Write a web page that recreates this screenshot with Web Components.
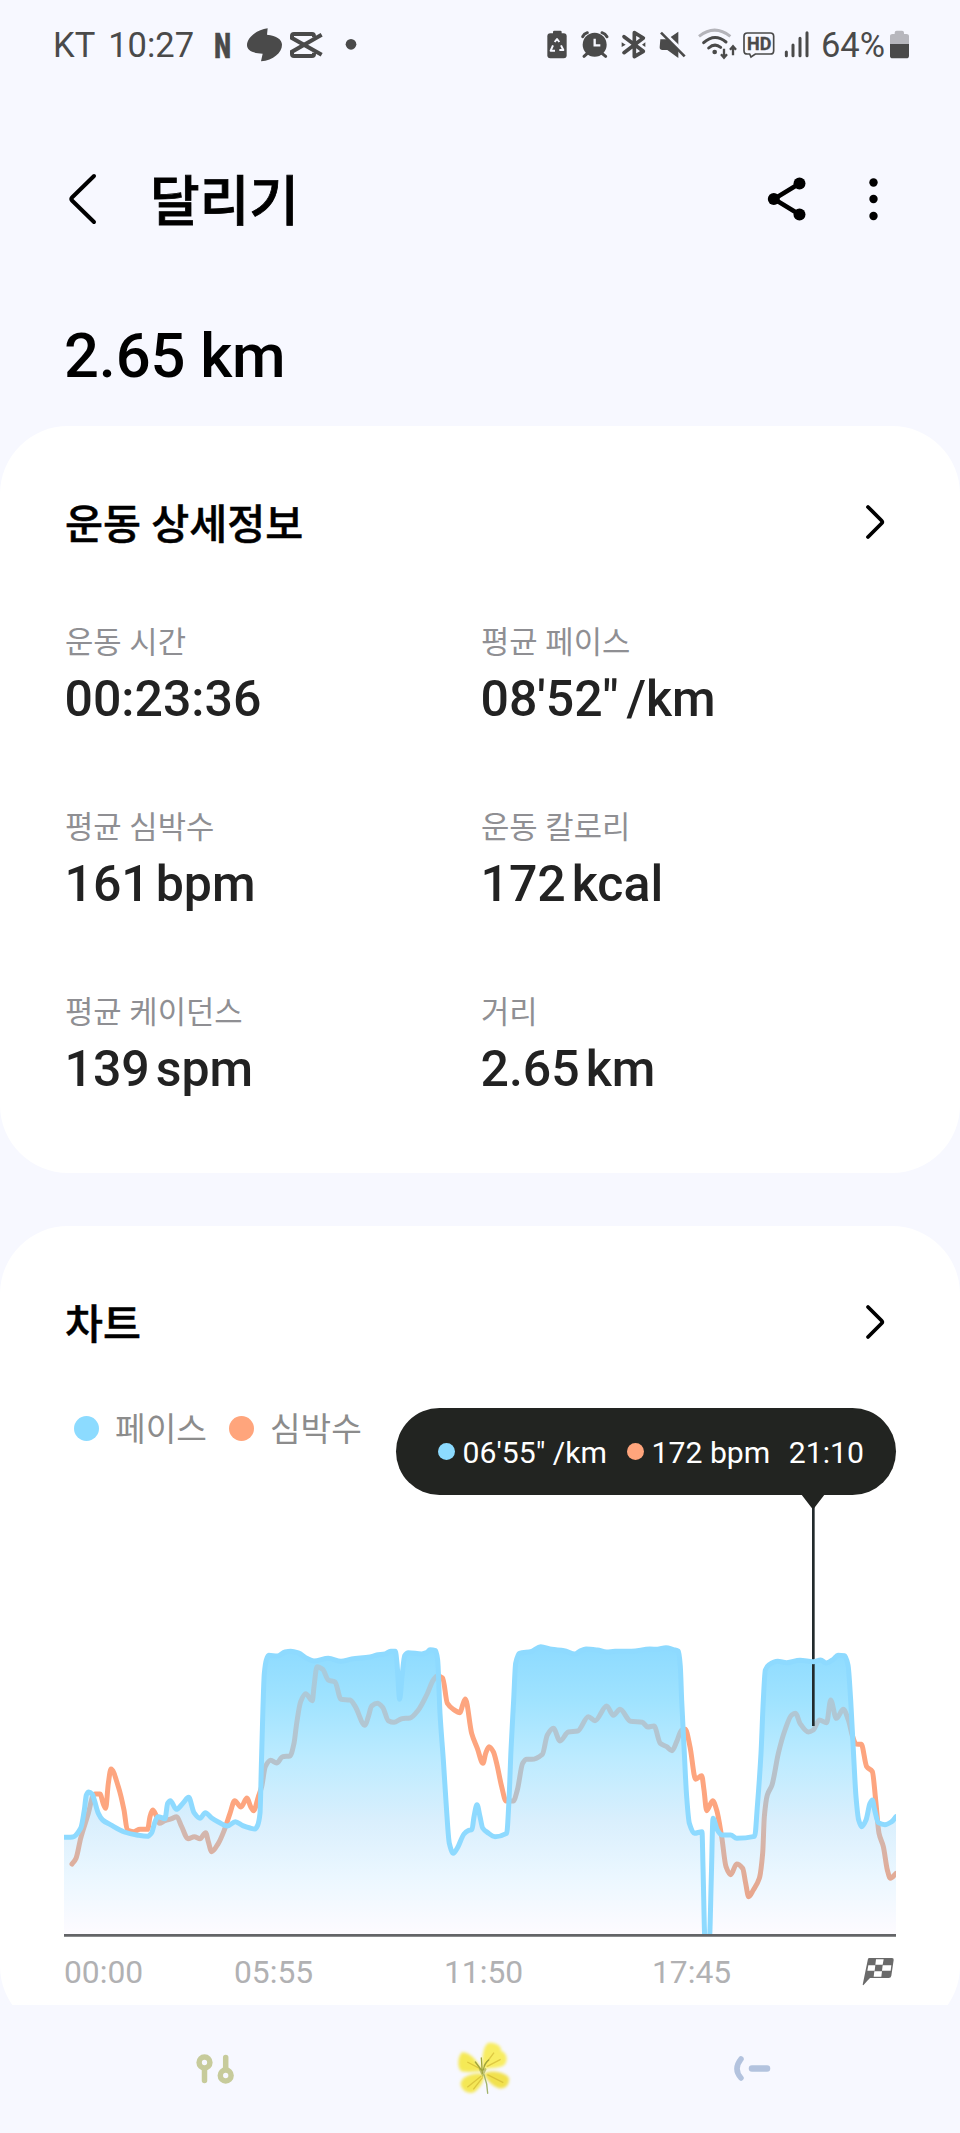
<!DOCTYPE html>
<html lang="ko">
<head>
<meta charset="utf-8">
<title>달리기</title>
<style>
  body {
    margin: 0;
    width: 960px;
    height: 2133px;
    overflow: hidden;
    background: #f7f8ff;
    color: #000;
    font-family: Roboto, 'Noto Sans CJK KR', sans-serif;
  }
</style>
</head>
<body>
<run-app></run-app>

<script>
class RunElement extends HTMLElement {
  constructor() {
    super();
    this.attachShadow({ mode: 'open' });
  }

  connectedCallback() {
    const template = document.createElement('template');
    template.innerHTML = `<style>${this.constructor.styles}</style>${this.html()}`;
    this.shadowRoot.replaceChildren(template.content.cloneNode(true));
  }
}

class RunStatusBar extends RunElement {
  static get styles() {
    return /* css */`
      :host {
        display: flex;
        align-items: flex-start;
        box-sizing: border-box;
        height: 100px;
        padding: 20px 51px 0 53px;
        color: #4a4a4a;
        font-size: 34.5px;
        line-height: 50px;
        white-space: nowrap;
      }
      svg { flex: none; }
      .time { width: 102px; margin-left: 13px; }
      .system { margin-left: auto; }
      .percent { margin: 0 5px 0 4px; }
    `;
  }

  html() {
    return /* html */`
      <span>KT</span>
      <span class="time">10:27</span>
      <svg class="apps" width="150" height="50" viewBox="630 60 450 150" fill="#4a4a4a">
        <text x="643" y="173" font-size="107" font-weight="900" stroke="#4a4a4a" stroke-width="2" textLength="50" lengthAdjust="spacingAndGlyphs">N</text>
        <path d="M803 85 L801 104 C830 106 846 119 846 134 C846 158 820 180 783 184 L788 161 C758 160 741 151 741 136 C741 112 770 90 803 85z"/>
        <g fill="none" stroke="#4a4a4a" stroke-width="12">
          <path d="M942 112 V109 Q942 102 936 102 H882 Q876 102 876 108 V114 L965 164"/>
          <path d="M965 104 L876 155 V162 Q876 168 882 168 H936 Q942 168 942 162 V158"/>
        </g>
        <circle cx="1053" cy="133" r="16"/>
      </svg>
      <svg class="system" width="273" height="50" viewBox="190 60 819 150" fill="none" stroke="#4a4a4a">
        <g stroke="none" fill="#4a4a4a">
          <rect x="217" y="92" width="26" height="14" rx="4"/>
          <rect x="200" y="100" width="58" height="75" rx="9"/>
        </g>
        <path d="M222 126 L229 117 L236 126 M241 136 L248 150 H236 M223 152 H210 L217 136" stroke="#f7f8ff" stroke-width="6" stroke-linejoin="round"/>
        <circle cx="342" cy="134" r="36" fill="#4a4a4a" stroke="none"/>
        <path d="M306 110 Q310 101 320 98 M364 98 Q374 101 379 110 M320 160 L310 169 M364 160 L375 169" stroke-width="9" stroke-linecap="round"/>
        <path d="M342 116 V136 H359" stroke="#f7f8ff" stroke-width="7"/>
        <path d="M430 110 L488 154 L461 170 V98 L488 114 L430 158" stroke-width="11" stroke-linejoin="round" stroke-linecap="round"/>
        <path d="M423 127 L435 134 L423 141z M494 127 L484 134 L494 141z" fill="#4a4a4a" stroke="none"/>
        <path d="M539 118 H560 L593 95 V174 L560 150 H545 Q537 150 537 142z" fill="#4a4a4a" stroke="none"/>
        <path d="M544 92 L618 164" stroke="#f7f8ff" stroke-width="9"/>
        <path d="M541 98 L612 169" stroke-width="8"/>
        <path d="M655 109 Q702 72 749 109" stroke="#b4b4ba" stroke-width="9"/>
        <path d="M669 128 Q702 98 736 126 M684 144 Q702 128 720 142" stroke-width="9" stroke-linecap="round"/>
        <circle cx="702" cy="156" r="7" fill="#4a4a4a" stroke="none"/>
        <path d="M730 146 V172 M721 163 L730 173 L739 163 M757 166 V140 M748 149 L757 139 L766 149" stroke-width="7"/>
        <path d="M800 99 H869 Q879 99 879 109 V152 Q879 162 869 162 H824 L811 171 L807 162 H800 Q790 162 790 152 V109 Q790 99 800 99z" stroke-width="5"/>
        <text x="799" y="149" font-size="57" font-weight="700" fill="#4a4a4a" stroke-width="1" textLength="73" lengthAdjust="spacingAndGlyphs">HD</text>
        <path d="M917 156 V167 M937 135 V167 M958 115 V167 M979 98 V167" stroke-width="9" stroke-linecap="round"/>
      </svg>
      <span class="percent">64%</span>
      <svg width="19" height="50" viewBox="1232 60 57 150">
        <path d="M1232 132 V109 Q1232 102 1240 102 H1246 V98 Q1246 92 1252 92 H1268 Q1274 92 1274 98 V102 H1281 Q1289 102 1289 109 V132z" fill="#b7b7bd"/>
        <path d="M1232 132 H1289 V167 Q1289 175 1281 175 H1240 Q1232 175 1232 167z" fill="#4a4a4a"/>
      </svg>
    `;
  }
}

class RunHeader extends RunElement {
  static get styles() {
    return /* css */`
      :host {
        display: flex;
        align-items: center;
        height: 100px;
        margin-top: 50px;
        padding: 0 81px 0 64px;
      }
      h1 {
        flex: 1;
        margin: 0 0 0 50px;
        padding-top: 5px;
        font-size: 54px;
        font-weight: 500;
        line-height: 80px;
        -webkit-text-stroke: .8px #000;
      }
      .more { margin-left: 61px; }
    `;
  }

  html() {
    return /* html */`
      <svg width="36" height="60" viewBox="0 0 36 60" fill="none" stroke="#000" stroke-width="4" stroke-linecap="round" stroke-linejoin="round">
        <path d="M30 6 L8 27.500 Q6.500 29 8 30.500 L30 52"/>
      </svg>
      <h1><slot></slot></h1>
      <svg width="42" height="50" viewBox="0 0 42 50">
        <path d="M33.500 8.500 L8 24 L33.500 39.500" fill="none" stroke="#000" stroke-width="4.500"/>
        <circle cx="33.500" cy="8.500" r="6"/><circle cx="7.800" cy="24" r="6"/><circle cx="33.500" cy="39.500" r="6"/>
      </svg>
      <svg class="more" width="10" height="50" viewBox="0 0 10 50">
        <circle cx="4.500" cy="7.500" r="4.200"/><circle cx="4.500" cy="24" r="4.200"/><circle cx="4.500" cy="41" r="4.200"/>
      </svg>
    `;
  }
}

class RunCard extends RunElement {
  static get styles() {
    return /* css */`
      :host {
        display: block;
        box-sizing: border-box;
        padding: 66px 64px 0;
        border-radius: 68px;
        background: #fff;
      }
      header {
        display: flex;
        align-items: center;
        justify-content: space-between;
        height: 60px;
        padding-right: 9px;
      }
      h2 {
        margin: 0;
        padding: 5px 0 0 1px;
        font-size: 41.3px;
        font-weight: 500;
        line-height: 60px;
        -webkit-text-stroke: .5px #000;
      }
    `;
  }

  html() {
    return /* html */`
      <header>
        <h2>${this.getAttribute('heading')}</h2>
        <svg width="24" height="40" viewBox="0 0 24 40" fill="none" stroke="#000" stroke-width="3.800" stroke-linecap="round" stroke-linejoin="round">
          <path d="M5 5 L18.500 18.500 Q20 20 18.500 21.500 L5 35"/>
        </svg>
      </header>
      <slot></slot>
    `;
  }
}

class RunMetric extends RunElement {
  static get styles() {
    return /* css */`
      :host { display: block; height: 185px; }
      .label {
        margin-bottom: 4px;
        padding-left: 1px;
        color: #8f8f93;
        font-size: 30.8px;
        line-height: 44px;
      }
      .value {
        display: flex;
        gap: 6px;
        padding-left: .5px;
        color: #222;
        font-size: 50px;
        font-weight: 500;
        line-height: 60px;
      }
      :host([unit="/km"]) .value { gap: 8px; }
    `;
  }

  html() {
    const unit = this.getAttribute('unit');
    return /* html */`
      <div class="label">${this.getAttribute('label')}</div>
      <div class="value"><span><slot></slot></span>${unit ? `<span>${unit}</span>` : ''}</div>
    `;
  }
}

class RunLegend extends RunElement {
  static get styles() {
    return /* css */`
      :host {
        display: flex;
        align-items: center;
        height: 50px;
        margin-top: 51px;
        padding-left: 10px;
        color: #8c8c8c;
        font-size: 33.3px;
        line-height: 50px;
      }
      i {
        width: 25px;
        height: 25px;
        margin-right: 16px;
        border-radius: 50%;
        background: #8cdbff;
      }
      span { padding-top: 4px; }
      .heart { margin-left: 22px; background: #ffa57c; }
    `;
  }

  html() {
    return /* html */`<i></i><span>페이스</span><i class="heart"></i><span>심박수</span>`;
  }
}

class RunTooltip extends RunElement {
  static get styles() {
    return /* css */`
      :host {
        display: flex;
        align-items: center;
        box-sizing: border-box;
        height: 87px;
        padding: 0 32px 0 42px;
        border-radius: 44px;
        background: #222421;
        color: #fff;
        font-size: 30.2px;
        line-height: 40px;
        white-space: pre;
      }
      span { padding-top: 2px; }
      i {
        width: 17px;
        height: 17px;
        margin-right: 7.5px;
        border-radius: 50%;
        background: #8cdbff;
      }
      .heart { margin-left: 20px; background: #ffa57c; }
      .time { margin-left: auto; }
      svg {
        position: absolute;
        top: 86px;
        right: 71px;
      }
    `;
  }

  html() {
    return /* html */`
      <i></i><span>06'55" /km</span>
      <i class="heart"></i><span>172 bpm</span>
      <span class="time">21:10</span>
      <svg width="24" height="16" viewBox="0 0 24 16" fill="#222421"><path d="M0 0 H24 L14 13 Q12 16 10 13z"/></svg>
    `;
  }
}

// Three chart units are one pixel; y grows downwards to the axis at 1004.
const PACE = [
  [0, 712], [26, 711], [50, 685], [61, 630], [67, 585], [74, 576], [85, 583], [91, 600], [103, 640], [116, 660],
  [139, 674], [181, 696], [218, 705], [250, 709], [263, 698], [273, 665], [282, 650], [303, 656], [311, 610],
  [319, 602], [337, 628], [358, 608], [374, 592], [390, 638], [408, 655], [424, 638], [443, 654], [463, 666],
  [490, 678], [514, 665], [536, 677], [558, 684], [573, 687], [581, 676], [588, 640], [592, 500], [597, 320],
  [601, 220], [607, 180], [614, 166], [640, 168], [663, 156], [680, 154], [703, 159], [728, 175], [750, 183],
  [793, 175], [831, 184], [863, 177], [918, 171], [938, 165], [963, 162], [980, 154], [994, 154], [999, 190],
  [1007, 298], [1014, 230], [1022, 167], [1033, 158], [1073, 162], [1088, 158], [1098, 149], [1115, 152],
  [1121, 180], [1128, 340], [1138, 480], [1147, 620], [1156, 730], [1168, 760], [1180, 744], [1200, 702],
  [1212, 692], [1224, 688], [1230, 650], [1239, 614], [1248, 650], [1256, 684], [1270, 697], [1293, 710],
  [1328, 700], [1335, 600], [1341, 450], [1349, 300], [1355, 190], [1366, 160], [1403, 154], [1430, 140],
  [1463, 148], [1500, 152], [1533, 162], [1548, 153], [1566, 147], [1600, 150], [1628, 156], [1653, 154],
  [1703, 154], [1758, 147], [1780, 148], [1806, 143], [1828, 149], [1844, 154], [1849, 200], [1853, 300],
  [1860, 440], [1868, 590], [1876, 670], [1891, 700], [1914, 695], [1917, 800], [1923, 1020], [1936, 1020],
  [1942, 830], [1947, 655], [1960, 690], [1973, 705], [2000, 705], [2018, 715], [2072, 709], [2080, 620],
  [2091, 460], [2098, 300], [2104, 210], [2114, 195], [2141, 184], [2168, 188], [2208, 181], [2248, 185],
  [2270, 180], [2286, 189], [2308, 178], [2322, 166], [2342, 167], [2352, 195], [2360, 300], [2368, 450],
  [2376, 590], [2384, 660], [2393, 680], [2406, 660], [2418, 610], [2425, 600], [2432, 630], [2443, 668],
  [2463, 674], [2483, 665], [2496, 650],
];

const HEART = [
  [24, 792], [36, 775], [50, 715], [73, 640], [86, 590], [93, 582], [108, 582], [118, 612], [125, 625], [133, 550],
  [141, 507], [163, 560], [180, 630], [190, 690], [208, 695], [228, 688], [251, 688], [258, 650], [266, 630],
  [278, 650], [286, 670], [303, 662], [323, 656], [338, 650], [353, 680], [372, 716], [391, 710], [408, 716],
  [425, 698], [433, 725], [443, 755], [463, 730], [481, 690], [498, 640], [512, 602], [531, 621], [549, 594],
  [560, 620], [569, 632], [583, 590], [593, 560], [604, 500], [620, 481], [638, 489], [656, 470], [678, 468],
  [690, 430], [698, 370], [710, 305], [725, 281], [745, 302], [750, 260], [759, 200], [776, 208], [793, 240],
  [813, 246], [831, 298], [858, 300], [873, 318], [903, 376], [913, 350], [923, 318], [940, 310], [956, 322],
  [973, 362], [990, 367], [1013, 356], [1038, 354], [1063, 330], [1088, 285], [1108, 240], [1120, 228],
  [1136, 234], [1150, 310], [1168, 328], [1188, 338], [1196, 315], [1204, 297], [1223, 400], [1240, 445],
  [1257, 490], [1265, 460], [1275, 440], [1288, 455], [1298, 490], [1313, 560], [1326, 603], [1348, 603],
  [1360, 570], [1376, 490], [1388, 478], [1403, 478], [1435, 463], [1450, 405], [1468, 385], [1488, 423],
  [1513, 396], [1541, 393], [1573, 350], [1593, 362], [1628, 318], [1648, 346], [1668, 328], [1700, 364],
  [1735, 367], [1751, 381], [1770, 378], [1789, 430], [1808, 440], [1824, 452], [1838, 425], [1853, 390],
  [1864, 388], [1878, 440], [1895, 538], [1913, 527], [1920, 570], [1928, 632], [1946, 602], [1958, 630],
  [1973, 710], [1986, 800], [2000, 824], [2018, 792], [2036, 805], [2045, 850], [2054, 890], [2068, 870],
  [2086, 835], [2096, 760], [2101, 650], [2110, 585], [2124, 555], [2143, 460], [2163, 390], [2183, 345],
  [2195, 340], [2208, 370], [2233, 396], [2248, 390], [2266, 360], [2288, 368], [2300, 300], [2317, 355],
  [2338, 328], [2353, 360], [2366, 410], [2376, 432], [2392, 433], [2408, 500], [2425, 515], [2435, 600],
  [2445, 700], [2458, 740], [2470, 810], [2479, 835], [2496, 820],
];

// Cubic path through the points, with no overshoot at peaks and dips.
function smoothPath(points) {
  const slopes = points.slice(1).map(([x, y], i) => (y - points[i][1]) / (x - points[i][0]));
  const tangents = points.map((_, i) => {
    const a = slopes[i - 1];
    const b = slopes[i];
    if (a === undefined) return b;
    if (b === undefined) return a;
    return a * b <= 0 ? 0 : 2 * a * b / (a + b);
  });
  return points.slice(1).reduce((d, [x, y], i) => {
    const [px, py] = points[i];
    const h = (x - px) / 3;
    return `${d} C${px + h} ${py + tangents[i] * h} ${x - h} ${y - tangents[i + 1] * h} ${x} ${y}`;
  }, `M${points[0]}`);
}

class RunChart extends RunElement {
  static get styles() {
    return /* css */`
      :host { display: block; position: relative; margin-top: 47px; }
      svg { display: block; }
      run-tooltip {
        position: absolute;
        top: -92px;
        right: 0;
        width: 500px;
      }
      .axis {
        display: grid;
        grid-template-columns: 170px 210px 208px 1fr auto;
        align-items: center;
        height: 71px;
        color: #b1b1b3;
        font-size: 31.8px;
        line-height: 71px;
      }
      .flag { margin: 0 1px 1px 0; }
    `;
  }

  html() {
    const pace = smoothPath(PACE);
    const heart = smoothPath(HEART);
    return /* html */`
      <svg width="832" height="437" viewBox="0 -300 2496 1311" fill="none" stroke-width="15" stroke-linecap="round" stroke-linejoin="round">
        <defs>
          <linearGradient id="fill" gradientUnits="userSpaceOnUse" x1="0" y1="150" x2="0" y2="1000">
            <stop offset="0" stop-color="#8edbff"/>
            <stop offset=".18" stop-color="#a0e3ff"/>
            <stop offset=".38" stop-color="#bcebff"/>
            <stop offset=".6" stop-color="#d9effd"/>
            <stop offset=".8" stop-color="#ebf7ff"/>
            <stop offset="1" stop-color="#fdfbff"/>
          </linearGradient>
          <linearGradient id="muted" gradientUnits="userSpaceOnUse" x1="0" y1="200" x2="0" y2="890">
            <stop offset="0" stop-color="#a8cbdc"/>
            <stop offset=".25" stop-color="#b2c6d2"/>
            <stop offset=".55" stop-color="#b9bfc6"/>
            <stop offset=".68" stop-color="#cfb9b3"/>
            <stop offset="1" stop-color="#e9a68c"/>
          </linearGradient>
          <clipPath id="plot"><rect y="-300" width="2496" height="1304"/></clipPath>
          <clipPath id="under"><path d="${pace} V1004 H0z"/></clipPath>
        </defs>
        <g clip-path="url(#plot)">
          <path d="${heart}" stroke="#fda57f"/>
          <path d="${pace} V1004 H0z" fill="url(#fill)" stroke="none"/>
          <path d="${heart}" stroke="url(#muted)" clip-path="url(#under)"/>
          <path d="M2248 -280 V378" stroke="#222a2c" stroke-width="8" stroke-linecap="butt"/>
          <path d="${pace}" stroke="#8edaff"/>
        </g>
        <path d="M0 1006 H2496" stroke="#636467" stroke-width="8" stroke-linecap="butt"/>
      </svg>
      <div class="axis">
        <span>00:00</span><span>05:55</span><span>11:50</span><span>17:45</span>
        <svg class="flag" width="33" height="28" viewBox="0 0 99 84">
          <path d="M18 2 Q19 0 22 0 H90 Q96 0 95 6 L88 53 Q87 60 80 60 H24 Q18 66 4 82 L2 80z" fill="#6a6a6a"/>
          <path d="M42 4 H65 L62 20 H40z M19 22 H40 L38 38 H16z M62 22 H88 L86 38 H60z M37 40 H60 L58 56 H35z" fill="#fff"/>
        </svg>
      </div>
      <run-tooltip></run-tooltip>
    `;
  }
}

class RunNav extends RunElement {
  static get styles() {
    return /* css */`
      :host {
        display: flex;
        align-items: center;
        justify-content: space-between;
        box-sizing: border-box;
        height: 128px;
        padding: 0 189px 0 195px;
        background: #f7f8ff;
      }
    `;
  }

  html() {
    return /* html */`
      <svg width="40" height="36" viewBox="0 0 40 36" fill="none" stroke="#c7cb9b" stroke-width="5.500">
        <circle cx="9.500" cy="11.500" r="5.400"/>
        <circle cx="30.700" cy="24.500" r="5.400"/>
        <path d="M9.500 18 V29.500 M30.700 18 V6.500" stroke-linecap="round"/>
      </svg>
      <svg class="flower" width="56" height="58" viewBox="48 60 168 174">
        <defs>
          <filter id="soft" x="-20%" y="-20%" width="140%" height="140%"><feGaussianBlur stdDeviation="4.5"/></filter>
          <filter id="vein" x="-20%" y="-20%" width="140%" height="140%"><feGaussianBlur stdDeviation="2"/></filter>
        </defs>
        <g filter="url(#soft)">
          <path d="M126 148 C112 128 94 96 66 97 C54 108 50 142 64 154 C86 160 104 152 126 154z" fill="#f5e957"/>
          <path d="M128 148 C124 118 130 76 144 69 C164 64 186 78 183 92 C204 100 204 124 192 136 C172 148 146 140 128 152z" fill="#f8ed62"/>
          <path d="M132 162 C104 156 64 168 62 190 C62 210 84 226 104 215 C122 202 132 184 132 162z" fill="#f4e756"/>
          <path d="M132 160 C154 148 196 156 207 174 C209 196 194 208 176 205 C154 196 140 182 132 160z" fill="#f1e14e"/>
        </g>
        <g fill="none" stroke="#cdb12e" stroke-width="4" opacity=".6" filter="url(#vein)">
          <path d="M120 146 L82 126 M132 138 L162 98 M140 140 L182 118 M124 168 L82 202 M128 172 L100 208 M142 164 L190 188"/>
        </g>
        <g fill="none" stroke="#9ea33d" stroke-linecap="round">
          <path d="M127 160 L124 114 M124 150 L106 126 M130 150 Q134 128 146 120" stroke-width="4"/>
          <path d="M120 148 L128 164 L136 148" stroke-width="7" opacity=".6"/>
          <path d="M132 164 Q142 190 143 220" stroke="#a1b26c" stroke-width="4"/>
        </g>
      </svg>
      <svg width="38" height="26" viewBox="0 0 38 26" fill="none" stroke="#b3c3de">
        <path d="M8 3 Q0 13 8 22" stroke-width="5.500" stroke-linecap="round"/>
        <path d="M19 12.500 H34" stroke-width="6.500" stroke-linecap="round"/>
      </svg>
    `;
  }
}

class RunApp extends RunElement {
  static get styles() {
    return /* css */`
      :host {
        display: grid;
        grid-template-rows: 2005px 128px;
        height: 2133px;
      }
      main { overflow: hidden; }
      .distance {
        box-sizing: border-box;
        height: 176px;
        padding: 66px 64px 0;
        font-size: 61.5px;
        font-weight: 500;
        letter-spacing: -.2px;
        line-height: 80px;
      }
      .details { height: 747px; }
      .metrics {
        display: grid;
        grid-template-columns: 416px 416px;
        margin-top: 69px;
      }
      .chart { height: 808px; margin-top: 53px; }
    `;
  }

  html() {
    return /* html */`
      <main>
        <run-status-bar></run-status-bar>
        <run-header>달리기</run-header>
        <div class="distance">2.65 km</div>
        <run-card class="details" heading="운동 상세정보">
          <div class="metrics">
            <run-metric label="운동 시간">00:23:36</run-metric>
            <run-metric label="평균 페이스" unit="/km">08'52"</run-metric>
            <run-metric label="평균 심박수" unit="bpm">161</run-metric>
            <run-metric label="운동 칼로리" unit="kcal">172</run-metric>
            <run-metric label="평균 케이던스" unit="spm">139</run-metric>
            <run-metric label="거리" unit="km">2.65</run-metric>
          </div>
        </run-card>
        <run-card class="chart" heading="차트">
          <run-legend></run-legend>
          <run-chart></run-chart>
        </run-card>
      </main>
      <run-nav></run-nav>
    `;
  }
}

customElements.define('run-status-bar', RunStatusBar);
customElements.define('run-header', RunHeader);
customElements.define('run-card', RunCard);
customElements.define('run-metric', RunMetric);
customElements.define('run-legend', RunLegend);
customElements.define('run-tooltip', RunTooltip);
customElements.define('run-chart', RunChart);
customElements.define('run-nav', RunNav);
customElements.define('run-app', RunApp);
</script>
</body>
</html>
